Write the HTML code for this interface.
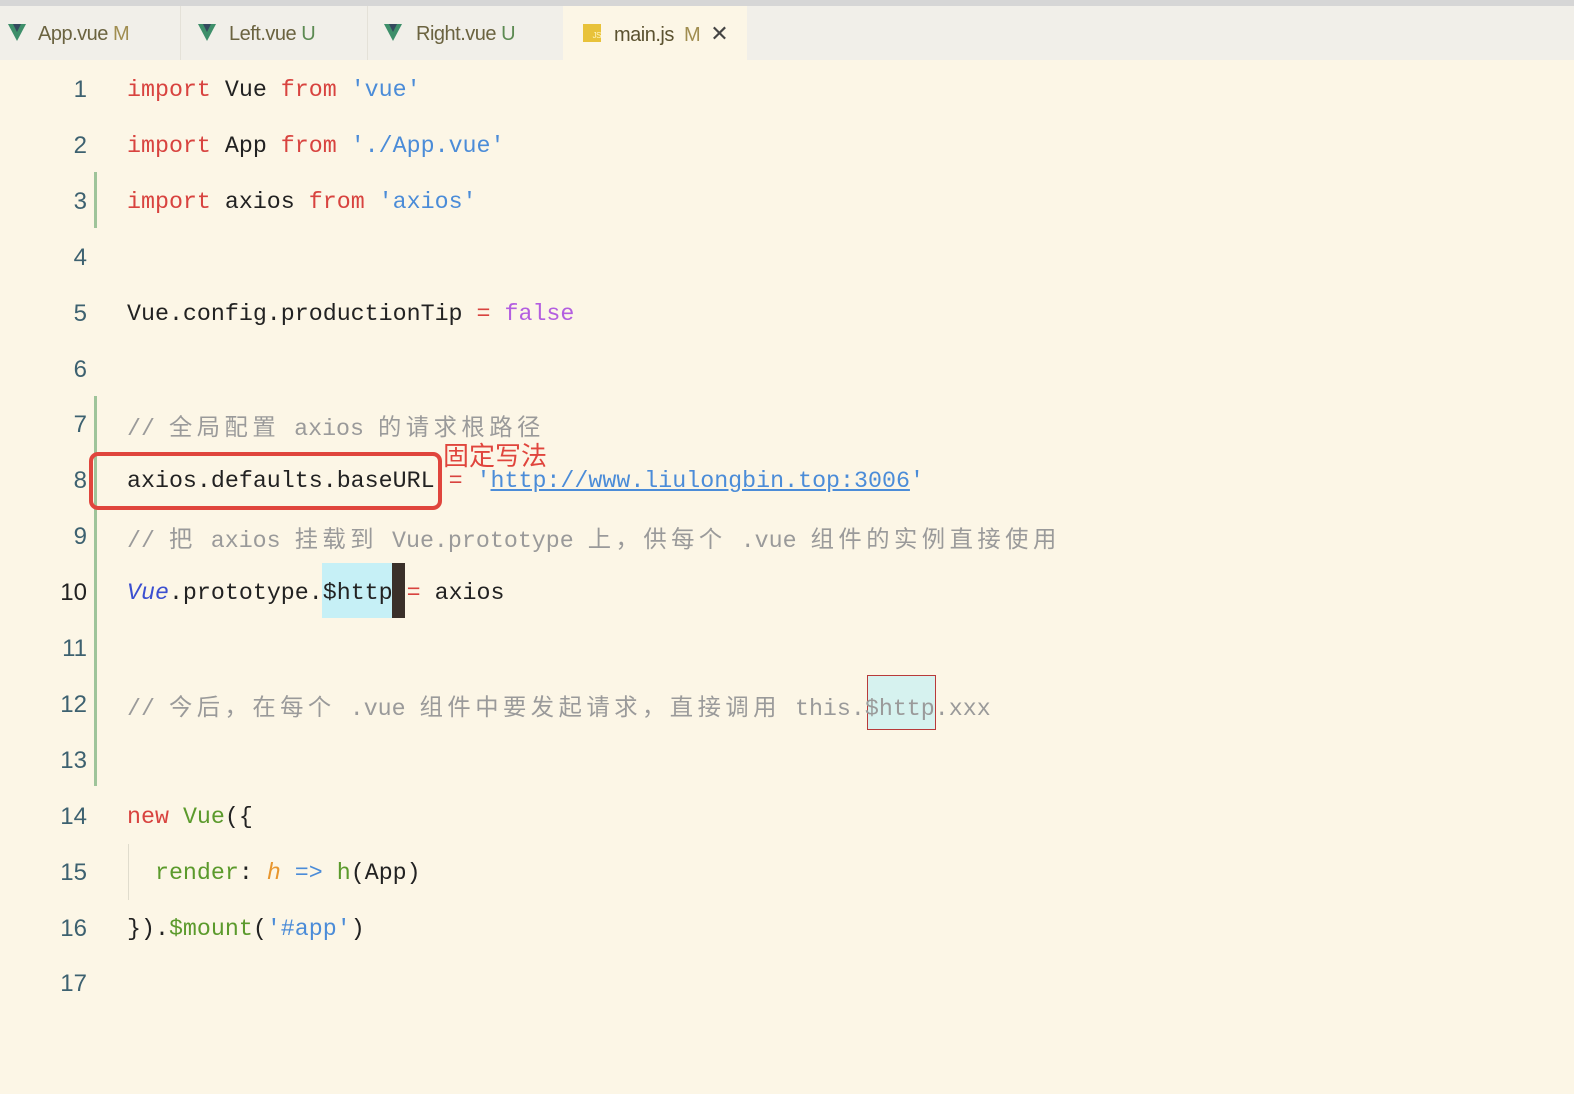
<!DOCTYPE html>
<html><head><meta charset="utf-8"><style>
body{margin:0;width:1574px;height:1094px;background:#fcf6e6;position:relative;overflow:hidden;font-family:"Liberation Mono","Noto Sans CJK SC",monospace;}
.top{position:absolute;left:0;top:0;width:1574px;height:6px;background:#d6d6d6}
.tabs{position:absolute;left:0;top:6px;width:1574px;height:54px;background:#f1efe9}
.tab{position:absolute;top:0;height:54px;font-family:"Liberation Sans",sans-serif;font-size:20px;line-height:56px;color:#6b6340;letter-spacing:-0.5px}
.tab .v{position:absolute;top:18px;width:0;height:0;border-left:9px solid transparent;border-right:9px solid transparent;border-top:17px solid #3e8f6a}
.tab .v:after{content:"";position:absolute;left:-4px;top:-17px;border-left:4px solid transparent;border-right:4px solid transparent;border-top:8px solid #34495e}
.sep{position:absolute;top:0;width:1px;height:54px;background:#e4e1d8}
.ln{position:absolute;left:0;width:87px;text-align:right;font-size:24px;line-height:60px;height:56px;color:#3d6170;font-family:"Liberation Sans",sans-serif}
.c{position:absolute;left:127px;font-size:23.3px;line-height:60px;height:56px;white-space:pre;color:#222}
.k{color:#d8433f}.s{color:#4b8cd8}.g{color:#5b9a2c}.p{color:#b35ee0}.cm{color:#9a9a9a}
.z{letter-spacing:4.5px;font-family:"Noto Sans CJK SC",sans-serif}
.bar{position:absolute;left:94px;width:3px;background:#9fc49a}
</style></head><body>
<div class="top"></div>
<div class="tabs">
<div class="tab" style="left:8px"><span class="v" style="left:0"></span><span style="margin-left:30px">App.vue <span style="color:#a08d50">M</span></span></div>
<div class="sep" style="left:180px"></div>
<div class="tab" style="left:198px"><span class="v" style="left:0"></span><span style="margin-left:31px">Left.vue <span style="color:#5c8a52">U</span></span></div>
<div class="sep" style="left:367px"></div>
<div class="tab" style="left:384px"><span class="v" style="left:0"></span><span style="margin-left:32px">Right.vue <span style="color:#5c8a52">U</span></span></div>
<div style="position:absolute;left:563px;top:0;width:184px;height:54px;background:#fcf6e6"></div>
<div class="tab" style="left:583px"><span style="position:absolute;left:0;top:18px;width:18px;height:18px;background:#e8c23a;color:#fff5c0;font-size:8px;line-height:24px;text-align:right">JS</span><span style="margin-left:31px;color:#5b5230">main.js &nbsp;<span style="color:#a08d50">M</span> &nbsp;<span style="color:#444;font-size:22px">✕</span></span></div>
</div>
<div class="bar" style="top:172px;height:56px"></div>
<div class="bar" style="top:396px;height:390px"></div>
<div style="position:absolute;left:128px;top:844px;width:1px;height:56px;background:#e0dccd"></div>

<div class="ln" style="top:60px">1</div><div class="c" style="top:60px"><span class="k">import</span> Vue <span class="k">from</span> <span class="s">'vue'</span></div>
<div class="ln" style="top:116px">2</div><div class="c" style="top:116px"><span class="k">import</span> App <span class="k">from</span> <span class="s">'./App.vue'</span></div>
<div class="ln" style="top:172px">3</div><div class="c" style="top:172px"><span class="k">import</span> axios <span class="k">from</span> <span class="s">'axios'</span></div>
<div class="ln" style="top:228px">4</div>
<div class="ln" style="top:284px">5</div><div class="c" style="top:284px">Vue.config.productionTip <span class="k">=</span> <span class="p">false</span></div>
<div class="ln" style="top:340px">6</div>
<div class="ln" style="top:395px">7</div><div class="c cm" style="top:395px">// <span class="z">全局配置</span> axios <span class="z">的请求根路径</span></div>
<div class="ln" style="top:451px">8</div><div class="c" style="top:451px">axios.defaults.baseURL <span class="k">=</span> <span class="s">'<u>http://www.liulongbin.top:3006</u>'</span></div>
<div style="position:absolute;left:89px;top:452px;width:345px;height:50px;border:4px solid #e0453d;border-radius:9px"></div>
<div style="position:absolute;left:443px;top:437px;font-family:'Noto Sans CJK SC',sans-serif;font-size:26px;line-height:36px;color:#e0453d">固定写法</div>
<div class="ln" style="top:507px">9</div><div class="c cm" style="top:507px">// <span class="z">把</span> axios <span class="z">挂载到</span> Vue.prototype <span class="z">上，供每个</span> .vue <span class="z">组件的实例直接使用</span></div>
<div style="position:absolute;left:322px;top:563px;width:70px;height:55px;background:#c6f0f6"></div>
<div style="position:absolute;left:392px;top:563px;width:13px;height:55px;background:#3a302a"></div>
<div class="ln" style="top:563px;color:#222">10</div><div class="c" style="top:563px"><i style="color:#3b4fd0">Vue</i>.prototype.$http <span class="k">=</span> axios</div>
<div class="ln" style="top:619px">11</div>
<div style="position:absolute;left:867px;top:675px;width:67px;height:53px;background:#d6f2ef;border:1px solid #b83a3a"></div>
<div class="ln" style="top:675px">12</div><div class="c cm" style="top:675px">// <span class="z">今后，在每个</span> .vue <span class="z">组件中要发起请求，直接调用</span> this.$http.xxx</div>
<div class="ln" style="top:731px">13</div>
<div class="ln" style="top:787px">14</div><div class="c" style="top:787px"><span class="k">new</span> <span class="g">Vue</span>({</div>
<div class="ln" style="top:843px">15</div><div class="c" style="top:843px">  <span class="g">render</span>: <i style="color:#e8962e">h</i> <span class="s">=&gt;</span> <span class="g">h</span>(App)</div>
<div class="ln" style="top:899px">16</div><div class="c" style="top:899px">}).<span class="g">$mount</span>(<span class="s">'#app'</span>)</div>
<div class="ln" style="top:954px">17</div>
</body></html>
